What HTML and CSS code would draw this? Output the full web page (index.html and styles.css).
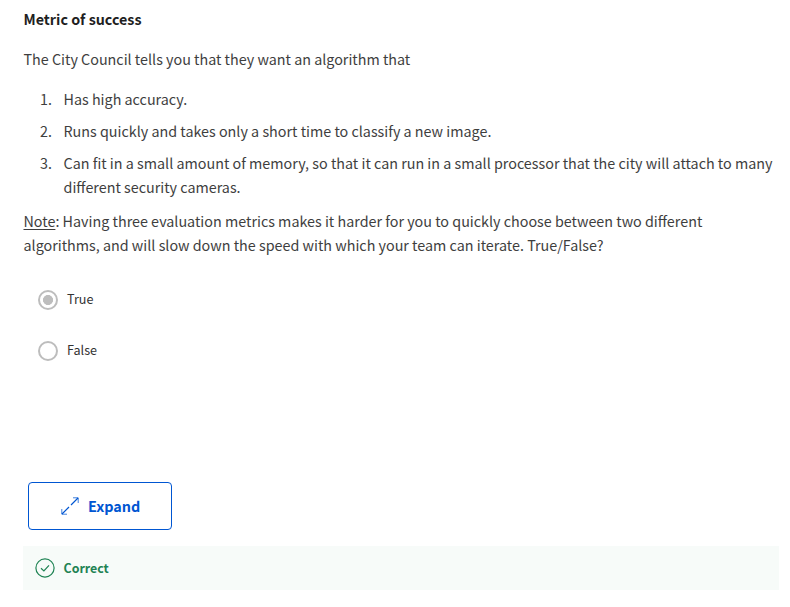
FILE: index.html
```
<!DOCTYPE html>
<html lang="en">
<head>
<meta charset="utf-8">
<title>Metric of success</title>
<link rel="stylesheet" href="styles.css">
</head>
<body>
<main class="question">
  <h1 class="title">Metric of success</h1>
  <p class="intro">The City Council tells you that they want an algorithm that</p>
  <ol class="criteria">
    <li>Has high accuracy.</li>
    <li>Runs quickly and takes only a short time to classify a new image.</li>
    <li>Can fit in a small amount of memory, so that it can run in a small processor that the city will attach to many<br>different security cameras.</li>
  </ol>
  <p class="note"><u>Note</u>: Having three evaluation metrics makes it harder for you to quickly choose between two different<br>algorithms, and will slow down the speed with which your team can iterate. True/False?</p>
  <div class="options">
    <div class="option"><span class="radio checked"></span><span class="label">True</span></div>
    <div class="option"><span class="radio"></span><span class="label">False</span></div>
  </div>
  <button class="expand" type="button">
    <svg class="expand-icon" width="18" height="18" viewBox="0 0 18 18" fill="none" stroke="currentColor"><path d="M1 17 8 10M10 8 17 1" stroke-width="1.2"/><path d="M12 .8H17.2V6M.8 12V17.2H6" opacity=".75"/></svg>
    <span>Expand</span>
  </button>
  <div class="feedback">
    <svg width="20" height="20" viewBox="0 0 20 20" fill="none" stroke="currentColor"><circle cx="10" cy="10" r="9.1" stroke-width="1.2"/><path d="M6 10.2 8.9 13 14 7.3" stroke-width="1.2"/></svg>
    <span>Correct</span>
  </div>
</main>
</body>
</html>
```
FILE: styles.css
```
* { box-sizing: border-box; }
body {
  margin: 0;
  background: #fff;
  color: #3e3e3e;
  font: 400 14.34px/24px "Noto Sans CJK SC", "Open Sans", sans-serif;
}
.question { padding: 7px 11px 0 23.5px; }
.title { margin: 0 0 16px; color: #1f1f1f; font-size: 14.3px; line-height: 24px; font-weight: 700; }
.intro { margin: 0 0 16px; }
.criteria { margin: 0; padding: 0; list-style: none; counter-reset: item; }
.criteria li { padding-left: 40px; margin-bottom: 8px; counter-increment: item; white-space: nowrap; }
.criteria li::before { content: counter(item) "."; float: left; width: 23.5px; margin-left: -23.5px; }
.criteria li:last-child { margin-bottom: 10px; }
.note { margin: 0; white-space: nowrap; }
.note u { text-underline-offset: 2px; text-decoration-thickness: 1px; }
.options { display: flex; flex-direction: column; gap: 31px; padding: 33px 0 0 14.5px; }
.option { display: flex; align-items: center; gap: 9px; height: 20px; font-size: 12.6px; color: #333; }
.label { margin-top: -2px; }
.radio { width: 20px; height: 20px; border: 2px solid #bdbdbd; border-radius: 50%; }
.radio.checked { background: radial-gradient(circle, #bdbdbd 4.7px, transparent 5.3px); }
.expand {
  display: flex; align-items: center; gap: 9px;
  width: 144px; height: 48px; margin: 121px 0 16px 4.5px; padding: 0 0 0 32px;
  border: 1px solid #0056d2; border-radius: 4px; background: #fff; color: #0056d2;
  font: 700 14.4px/24px "Noto Sans CJK SC", sans-serif;
}
.feedback {
  display: flex; align-items: center; gap: 9px; height: 44px; padding-left: 11.5px;
  margin-left: -.5px;
  background: #f7fbf9; color: #1f8354; font-size: 12.4px; font-weight: 700;
}
```
